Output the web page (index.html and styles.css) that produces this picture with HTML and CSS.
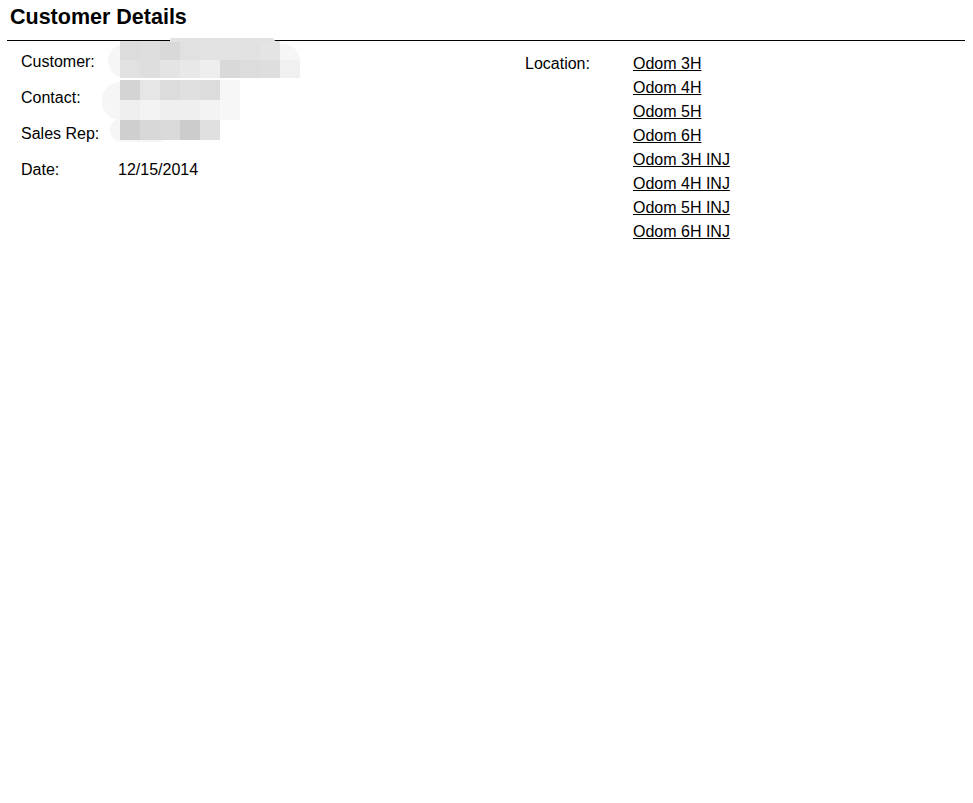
FILE: index.html
```html
<!DOCTYPE html>
<html lang="en">
<head>
  <meta charset="UTF-8" />
  <meta name="viewport" content="width=device-width, initial-scale=1.0"/>
  <title>Customer Details</title>
  <link rel="stylesheet" href="styles.css">
</head>
<body>
  <h1 class="page-title">Customer Details</h1>
  <div class="rule"></div>

  <div class="details">
    <div class="info-grid">
      <div class="label">Customer:</div>
      <div class="value">
        <div class="redact redact-customer">
          <span class="px c1"></span><span class="px c2"></span><span class="px c3"></span><span class="px c4"></span><span class="px c5"></span><span class="px c5"></span><span class="px c4"></span><span class="px c6"></span><span class="px blank"></span>
          <span class="px c4"></span><span class="px c2"></span><span class="px c6"></span><span class="px c7"></span><span class="px c8"></span><span class="px c3"></span><span class="px c1"></span><span class="px c2"></span><span class="px c9"></span>
        </div>
      </div>

      <div class="label">Contact:</div>
      <div class="value">
        <div class="redact redact-contact">
          <span class="px d1"></span><span class="px d2"></span><span class="px d3"></span><span class="px d4"></span><span class="px d3"></span><span class="px d5"></span>
          <span class="px e1"></span><span class="px e2"></span><span class="px e1"></span><span class="px e1"></span><span class="px e2"></span><span class="px d5"></span>
        </div>
      </div>

      <div class="label">Sales Rep:</div>
      <div class="value">
        <div class="redact redact-rep">
          <span class="px s1"></span><span class="px s2"></span><span class="px s3"></span><span class="px s4"></span><span class="px s5"></span>
        </div>
      </div>

      <div class="label">Date:</div>
      <div class="value">12/15/2014</div>
    </div>

    <div class="location-grid">
      <div class="label">Location:</div>
      <ul class="locations">
        <li><a href="#">Odom 3H</a></li>
        <li><a href="#">Odom 4H</a></li>
        <li><a href="#">Odom 5H</a></li>
        <li><a href="#">Odom 6H</a></li>
        <li><a href="#">Odom 3H INJ</a></li>
        <li><a href="#">Odom 4H INJ</a></li>
        <li><a href="#">Odom 5H INJ</a></li>
        <li><a href="#">Odom 6H INJ</a></li>
      </ul>
    </div>
  </div>
</body>
</html>
```

FILE: styles.css
```css
body {
  margin: 0;
  font-family: "Liberation Sans", Arial, sans-serif;
  font-size: 16px;
  color: #000;
  background-color: #fff;
}
.page-title {
  margin: 5px 0 0 10px;
  font-size: 21.5px;
  line-height: 24px;
  font-weight: bold;
}
.rule {
  margin: 11px 8px 0 7px;
  border-top: 1px solid #000;
}
.details {
  display: flex;
  padding-left: 21px;
}
.info-grid {
  width: 504px;
  margin-top: 3px;
  display: grid;
  grid-template-columns: 97px auto;
  grid-auto-rows: 36px;
  line-height: 36px;
}
.value {
  position: relative;
}
.location-grid {
  margin-top: 11px;
  display: grid;
  grid-template-columns: 108px auto;
  line-height: 24px;
  align-items: start;
}
.locations {
  list-style: none;
  margin: 0;
  padding: 0;
}
.locations a {
  color: #000;
  text-decoration: underline;
}

/* blurred-out values */
.redact {
  position: absolute;
  left: 2px;
  display: grid;
  grid-auto-rows: 20px;
  grid-template-columns: repeat(var(--cols), 20px);
  line-height: 0;
}
.redact::before {
  content: "";
  position: absolute;
  z-index: -1;
  background-color: #f6f6f6;
  border-radius: 18px;
}
.redact-customer {
  --cols: 9;
  top: -3px;
  grid-template-rows: 19px 18px;
}
.redact-customer::before {
  left: -12px;
  top: 3px;
  width: 192px;
  height: 34px;
}
.redact-customer::after {
  content: "";
  position: absolute;
  left: 50px;
  top: -3px;
  width: 105px;
  height: 4px;
  background-color: #e2e2e2;
  border-radius: 4px 10px 0 0;
}
.redact-contact {
  --cols: 6;
  top: 0;
}
.redact-contact::before {
  left: -18px;
  top: 2px;
  width: 138px;
  height: 38px;
  border-radius: 18px 4px 4px 18px;
}
.redact-rep {
  --cols: 5;
  top: 4px;
}
.redact-rep::before {
  left: -10px;
  top: -2px;
  width: 60px;
  height: 24px;
}
.px.blank { background-color: transparent; }
.c1 { background-color: #dcdcdc; }
.c2 { background-color: #dedede; }
.c3 { background-color: #d9d9d9; }
.c4 { background-color: #e1e1e1; }
.c5 { background-color: #e3e3e3; }
.c6 { background-color: #e4e4e4; }
.c7 { background-color: #e8e8e8; }
.c8 { background-color: #eeeeee; }
.c9 { background-color: #f0f0f0; }
.d1 { background-color: #d4d4d4; }
.d2 { background-color: #e6e6e6; }
.d3 { background-color: #dcdcdc; }
.d4 { background-color: #e0e0e0; }
.d5 { background-color: #f7f7f7; }
.e1 { background-color: #efefef; }
.e2 { background-color: #f3f3f3; }
.s1 { background-color: #cfcfcf; }
.s2 { background-color: #d8d8d8; }
.s3 { background-color: #dadada; }
.s4 { background-color: #cccccc; }
.s5 { background-color: #e0e0e0; }
```
